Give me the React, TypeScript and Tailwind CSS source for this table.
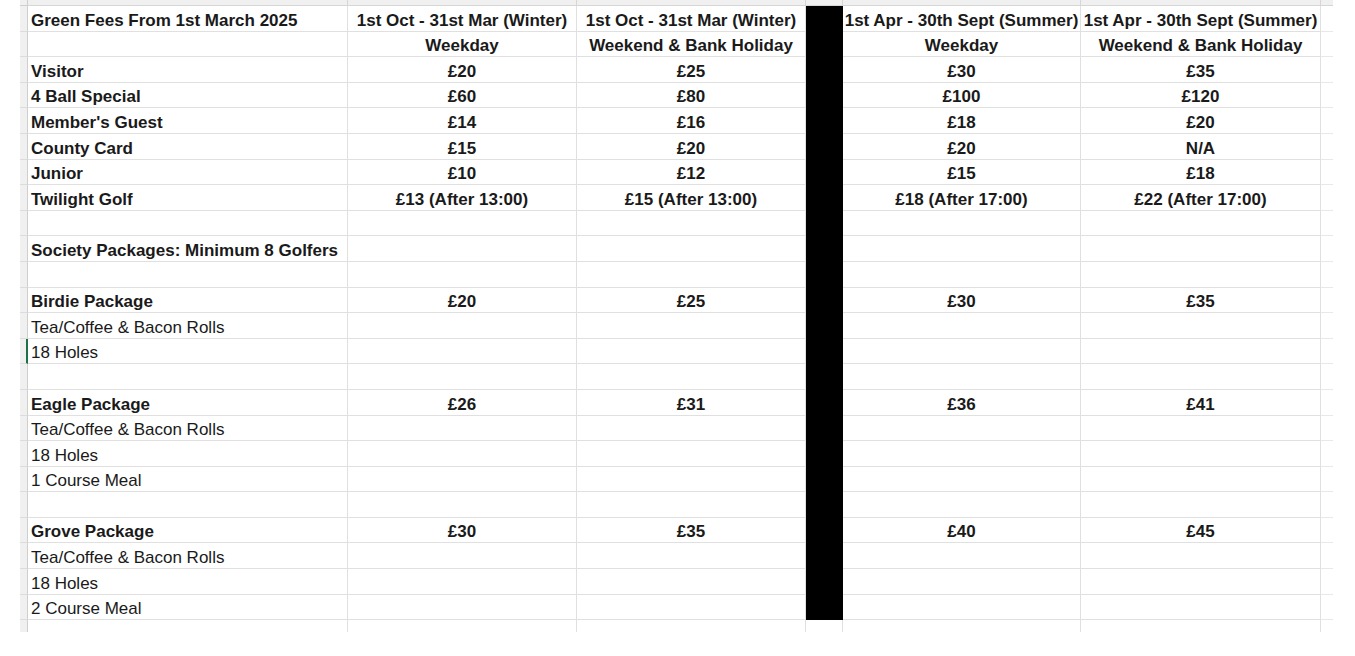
type Row = {
  label: string;
  bold?: boolean;
  vals?: string[];
  marker?: boolean;
};

const winter = "1st Oct - 31st Mar (Winter)";
const summer = "1st Apr - 30th Sept (Summer)";
const weekday = "Weekday";
const weekend = "Weekend & Bank Holiday";

const rows: Row[] = [
  { label: "Green Fees From 1st March 2025", bold: true, vals: [winter, winter, summer, summer] },
  { label: "", vals: [weekday, weekend, weekday, weekend] },
  { label: "Visitor", bold: true, vals: ["£20", "£25", "£30", "£35"] },
  { label: "4 Ball Special", bold: true, vals: ["£60", "£80", "£100", "£120"] },
  { label: "Member's Guest", bold: true, vals: ["£14", "£16", "£18", "£20"] },
  { label: "County Card", bold: true, vals: ["£15", "£20", "£20", "N/A"] },
  { label: "Junior", bold: true, vals: ["£10", "£12", "£15", "£18"] },
  {
    label: "Twilight Golf",
    bold: true,
    vals: ["£13 (After 13:00)", "£15 (After 13:00)", "£18 (After 17:00)", "£22 (After 17:00)"],
  },
  { label: "" },
  { label: "Society Packages: Minimum 8 Golfers", bold: true },
  { label: "" },
  { label: "Birdie Package", bold: true, vals: ["£20", "£25", "£30", "£35"] },
  { label: "Tea/Coffee & Bacon Rolls" },
  { label: "18 Holes", marker: true },
  { label: "" },
  { label: "Eagle Package", bold: true, vals: ["£26", "£31", "£36", "£41"] },
  { label: "Tea/Coffee & Bacon Rolls" },
  { label: "18 Holes" },
  { label: "1 Course Meal" },
  { label: "" },
  { label: "Grove Package", bold: true, vals: ["£30", "£35", "£40", "£45"] },
  { label: "Tea/Coffee & Bacon Rolls" },
  { label: "18 Holes" },
  { label: "2 Course Meal" },
];

const cell = "h-[25.6px] border-r border-b border-[#e0e0e0] flex items-end leading-[20px] whitespace-nowrap";

function ValueCell({ text }: { text?: string }) {
  return (
    <div className={`${cell} justify-center font-bold overflow-visible`}>
      <span>{text ?? ""}</span>
    </div>
  );
}

function SheetRow({ row }: { row: Row }) {
  const v = row.vals ?? [];
  return (
    <div className="flex">
      <div
        className={`w-[8px] h-[25.6px] bg-[#f0f0f0] border-b border-[#dcdcdc] ${
          row.marker ? "border-r-2 border-r-[#1e7145]" : "border-r border-r-[#cfcfcf]"
        }`}
      />
      <div className={`${cell} w-[320px] pl-[3px] ${row.bold ? "font-bold" : ""}`}>{row.label}</div>
      <div className="w-[229px]">
        <ValueCell text={v[0]} />
      </div>
      <div className="w-[229px]">
        <ValueCell text={v[1]} />
      </div>
      <div className="w-[37px] h-[25.6px] bg-black" />
      <div className="w-[238px]">
        <ValueCell text={v[2]} />
      </div>
      <div className="w-[240px]">
        <ValueCell text={v[3]} />
      </div>
      <div className="w-[12px] h-[25.6px] border-b border-[#e8e8e8]" />
    </div>
  );
}

export default function App() {
  return (
    <div className="w-[1355px] h-[656px] bg-white overflow-hidden pl-[20px] font-['Liberation_Sans',Arial,sans-serif] text-[17px] text-[#1a1a1a]">
      {/* column header stub */}
      <div className="flex h-[6px]">
        <div className="w-[8px] bg-[#f0f0f0] border-r border-b border-[#cfcfcf]" />
        <div className="w-[320px] bg-[#f0f0f0] border-r border-b border-[#d6d6d6]" />
        <div className="w-[229px] bg-[#f0f0f0] border-r border-b border-[#d6d6d6]" />
        <div className="w-[229px] bg-[#f0f0f0] border-r border-b border-[#d6d6d6]" />
        <div className="w-[37px] bg-[#f0f0f0] border-r border-b border-[#d6d6d6]" />
        <div className="w-[238px] bg-[#f0f0f0] border-r border-b border-[#d6d6d6]" />
        <div className="w-[240px] bg-[#f0f0f0] border-r border-b border-[#d6d6d6]" />
        <div className="w-[12px] bg-[#f0f0f0] border-b border-[#d6d6d6]" />
      </div>

      {rows.map((row, i) => (
        <SheetRow key={i} row={row} />
      ))}

      {/* partial row at the bottom */}
      <div className="flex h-[12px]">
        <div className="w-[8px] bg-[#f0f0f0] border-r border-[#cfcfcf]" />
        <div className="w-[320px] border-r border-[#e0e0e0]" />
        <div className="w-[229px] border-r border-[#e0e0e0]" />
        <div className="w-[229px] border-r border-[#e0e0e0]" />
        <div className="w-[37px] border-r border-[#e0e0e0]" />
        <div className="w-[238px] border-r border-[#e0e0e0]" />
        <div className="w-[240px] border-r border-[#e0e0e0]" />
      </div>
    </div>
  );
}
